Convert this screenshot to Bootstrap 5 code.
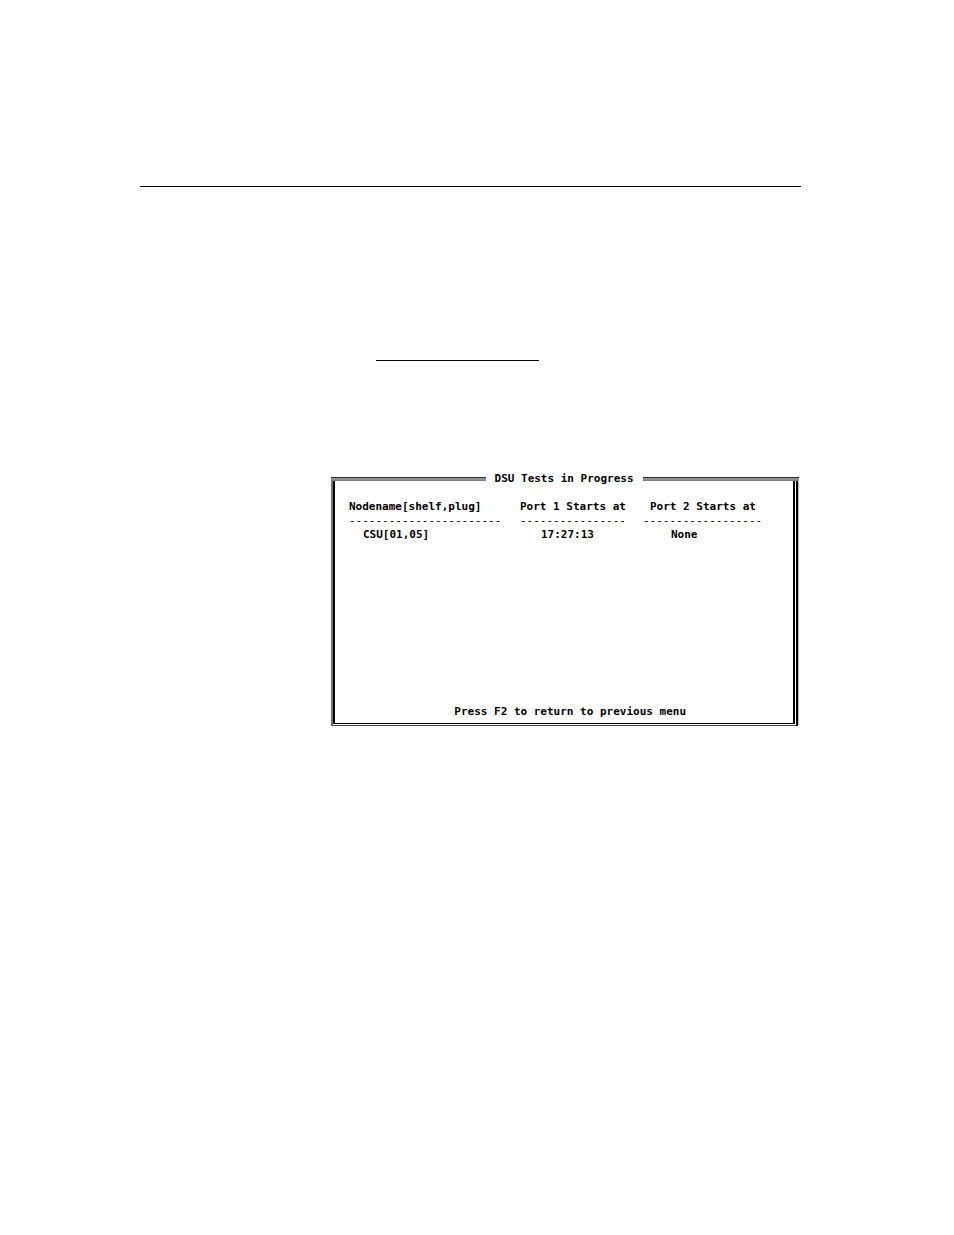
<!DOCTYPE html>
<html lang="en">
<head>
<meta charset="utf-8">
<meta name="viewport" content="width=device-width, initial-scale=1">
<title>DSU Tests in Progress</title>
<link href="https://cdn.jsdelivr.net/npm/bootstrap@5.3.0/dist/css/bootstrap.min.css" rel="stylesheet">
<style>
body { background: #fff; color: #000; font-family: "DejaVu Sans Mono", monospace; font-size: 11px; line-height: 14px; }
.sheet { padding: 186px 16% 0 140px; }
.rule { border: 0; border-top: 1px solid #000; opacity: 1; margin: 0; }
.page-rule { margin-bottom: 173px; }
.link-rule { width: 163px; margin: 0 0 111px 236px; }
/* Double-line terminal frame: outer lines on the frame, inner lines on the screen */
.terminal { margin: 0 2px 0 191px; font-weight: 700; }
.title-bar h1 { font-size: 11px; line-height: 14px; font-weight: 700; width: 157px; }
.title-line { height: 4px; background: #909090; border-top: 1px solid #303030; border-bottom: 1px solid #808080; }
.title-line.lead-in { width: 33%; }
.frame { margin-top: -5px; border-style: solid; border-color: #808080 #000 #505050 #707070; border-width: 0 2px 1px 2px; box-shadow: 1px 1px #b8b8b8; padding: 0 1px 1px 0; margin-right: 1px; }
.screen { border: solid #000; border-width: 0 2px 1px 2px; padding: 19px 14px 4px; min-height: 243px; }
.tests { white-space: nowrap; width: 416px; }
.tests th, .tests td { padding: 0; font-weight: 700; }
.tests .dashes td { font-weight: 400; }
.tests .node { width: 171px; }
.tests .port { width: 123px; }
.tests .in-1 { padding-left: 7px; }
.tests .in-2 { padding-left: 14px; }
.tests .in-3 { padding-left: 21px; }
.tests .in-4 { padding-left: 28px; }
.hint { padding-left: 12px; }
</style>
</head>
<body>
<main class="sheet">
<hr class="rule page-rule">
<hr class="rule link-rule">
<section class="terminal">
<header class="title-bar d-flex align-items-center">
<div class="title-line lead-in"></div>
<h1 class="m-0 text-center text-nowrap">DSU Tests in Progress</h1>
<div class="title-line flex-fill"></div>
</header>
<div class="frame">
<div class="screen d-flex flex-column justify-content-between">
<table class="tests">
<thead>
<tr><th class="node" scope="col">Nodename[shelf,plug]</th><th class="port" scope="col">Port 1 Starts at</th><th class="in-1" scope="col">Port 2 Starts at</th></tr>
<tr class="dashes" aria-hidden="true"><td>-----------------------</td><td>----------------</td><td>------------------</td></tr>
</thead>
<tbody>
<tr><td class="in-2">CSU[01,05]</td><td class="in-3">17:27:13</td><td class="in-4">None</td></tr>
</tbody>
</table>
<p class="hint m-0 text-center">Press F2 to return to previous menu</p>
</div>
</div>
</section>
</main>
<script src="https://cdn.jsdelivr.net/npm/bootstrap@5.3.0/dist/js/bootstrap.bundle.min.js"></script>
</body>
</html>
